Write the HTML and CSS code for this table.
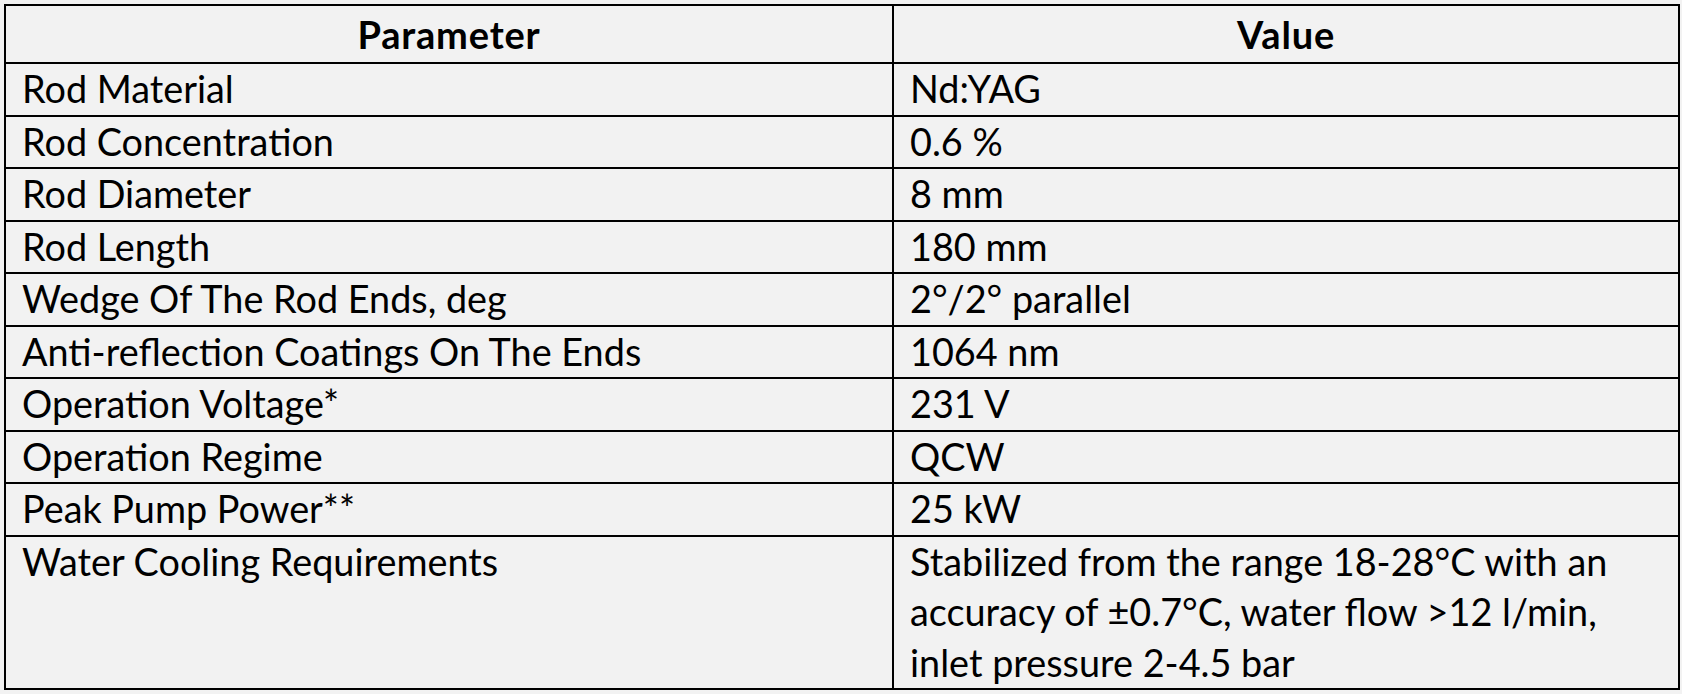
FILE: index.html
```html
<!DOCTYPE html>
<html>
<head>
<meta charset="utf-8">
<link rel="stylesheet" href="styles.css">
</head>
<body>
<div class="spec">
  <div class="cell head">Parameter</div>
  <div class="cell head">Value</div>
  <div class="cell">Rod Material</div>
  <div class="cell">Nd:YAG</div>
  <div class="cell">Rod Concentration</div>
  <div class="cell">0.6 %</div>
  <div class="cell">Rod Diameter</div>
  <div class="cell">8 mm</div>
  <div class="cell">Rod Length</div>
  <div class="cell">180 mm</div>
  <div class="cell">Wedge Of The Rod Ends, deg</div>
  <div class="cell">2°/2° parallel</div>
  <div class="cell">Anti-reflection Coatings On The Ends</div>
  <div class="cell">1064 nm</div>
  <div class="cell">Operation Voltage*</div>
  <div class="cell">231 V</div>
  <div class="cell">Operation Regime</div>
  <div class="cell">QCW</div>
  <div class="cell">Peak Pump Power**</div>
  <div class="cell">25 kW</div>
  <div class="cell">Water Cooling Requirements</div>
  <div class="cell">Stabilized from the range 18-28°C with an<br>accuracy of ±0.7°C, water flow &gt;12 l/min,<br>inlet pressure 2-4.5 bar</div>
</div>
</body>
</html>
```
FILE: styles.css
```css
html, body {
  margin: 0;
  padding: 0;
  background: #f2f2f2;
}
body {
  font-family: Lato, "Liberation Sans", sans-serif;
  color: #000;
}
.spec {
  display: grid;
  grid-template-columns: 888px 786px;
  margin: 4px 0 0 4px;
  width: 1676px;
  box-sizing: border-box;
  border-top: 2px solid #000;
  border-left: 2px solid #000;
}
.cell {
  box-sizing: border-box;
  border-right: 2px solid #000;
  border-bottom: 2px solid #000;
  padding: 0 0 0 16px;
  font-size: 37.8px;
  line-height: 50.5px;
  white-space: nowrap;
}
.head {
  font-weight: bold;
  font-size: 38px;
  letter-spacing: 0.8px;
  text-align: center;
  padding: 0;
  line-height: 56px;
}
```
